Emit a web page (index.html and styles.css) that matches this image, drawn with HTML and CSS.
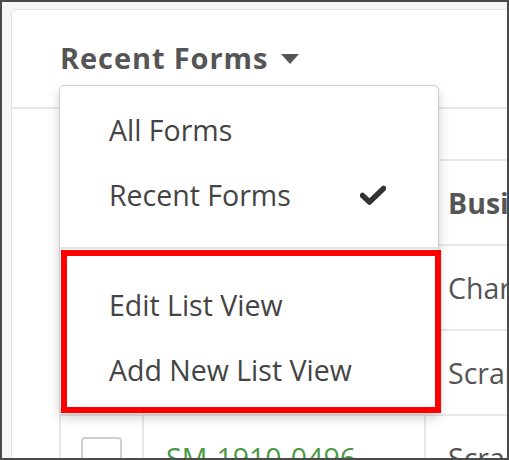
FILE: index.html
```html
<!DOCTYPE html>
<html lang="en">
<head>
<meta charset="utf-8">
<title>Recent Forms</title>
<link rel="stylesheet" href="styles.css">
</head>
<body>
<div class="frame">
  <div class="card">
    <div class="card-header">
      <span class="title">Recent Forms</span><span class="caret"></span>
    </div>
    <div class="card-body">
      <div class="gutter"></div>
      <div class="table">
        <div class="band"></div>
        <div class="row head">
          <div class="cell check"><span class="box"></span></div>
          <div class="cell"></div>
          <div class="cell strong">Business Name</div>
        </div>
        <div class="row">
          <div class="cell check"><span class="box"></span></div>
          <div class="cell id"></div>
          <div class="cell">Charlotte Metals</div>
        </div>
        <div class="row">
          <div class="cell check"><span class="box"></span></div>
          <div class="cell id"></div>
          <div class="cell">Scrap Metal Co</div>
        </div>
        <div class="row">
          <div class="cell check"><span class="box"></span></div>
          <div class="cell id">SM-1910-0496</div>
          <div class="cell">Scrap Metal Co</div>
        </div>
      </div>
    </div>
    <div class="dropdown">
      <div class="item">All Forms</div>
      <div class="item">Recent Forms
        <svg class="tick" width="26" height="20" viewBox="0 0 26 20"><path d="M2.5 10.5 L9.5 17 L23.5 3.5" fill="none" stroke="#333" stroke-width="5.5" stroke-linejoin="round" stroke-linecap="round"/></svg>
      </div>
      <div class="divider"></div>
      <div class="item">Edit List View</div>
      <div class="item">Add New List View</div>
    </div>
  </div>
  <div class="highlight"></div>
</div>
</body>
</html>
```

FILE: styles.css
```css
* { box-sizing: border-box; }
html, body { margin: 0; padding: 0; background: #fff; }
body { font-family: "Open Sans", "DejaVu Sans", sans-serif; }

.frame {
  position: relative;
  width: 509px;
  height: 460px;
  border: 2px solid #4a4a4a;
  background: #f5f5f5;
  overflow: hidden;
  padding: 7px 0 0 9px;
}

.card {
  position: relative;
  width: 620px;
  height: 620px;
  background: #fff;
  border: 1px solid #e4e4e4;
  border-radius: 5px;
}

.card-header {
  height: 99px;
  padding: 30px 0 0 48px;
  border-bottom: 2px solid #e8e8e8;
  line-height: 36px;
  white-space: nowrap;
}
.title {
  font-size: 29px;
  font-weight: 700;
  letter-spacing: 0.9px;
  color: #555;
}
.caret {
  display: inline-block;
  width: 0;
  height: 0;
  margin-left: 13px;
  vertical-align: 5px;
  border-left: 9.5px solid transparent;
  border-right: 9.5px solid transparent;
  border-top: 10px solid #555;
}

.card-body { display: flex; }
.gutter { width: 47px; flex: none; }
.table { flex: 1; }
.band { height: 52px; border-bottom: 2px solid #e8e8e8; }
.row {
  display: grid;
  grid-template-columns: 83px 282px 1fr;
  height: 85px;
  border-bottom: 2px solid #e8e8e8;
}
.cell {
  display: flex;
  align-items: center;
  padding-left: 22px;
  border-left: 2px solid #e8e8e8;
  font-size: 28.5px;
  color: #555;
  white-space: nowrap;
  overflow: hidden;
}
.cell.strong { font-weight: 700; }
.cell.id { color: #4b9a45; }
.cell.check { justify-content: center; padding-left: 0; }
.box {
  width: 41px;
  height: 41px;
  border: 2px solid #cfcfcf;
  border-radius: 4px;
  background: #fff;
}

.dropdown {
  position: absolute;
  left: 47px;
  top: 75px;
  width: 380px;
  background: #fff;
  border: 1px solid #cdcdcd;
  border-radius: 5px;
  box-shadow: 0 6px 12px rgba(0, 0, 0, 0.18);
  padding: 11px 0 9px;
}
.item {
  display: flex;
  align-items: center;
  justify-content: space-between;
  height: 65px;
  padding: 0 52px 0 49px;
  font-size: 28.5px;
  color: #444;
  white-space: nowrap;
}
.tick { flex: none; }
.divider {
  height: 2px;
  margin: 20px 0 23px;
  background: #e5e5e5;
}

.highlight {
  position: absolute;
  left: 59px;
  top: 248px;
  width: 380px;
  height: 163px;
  border: 6px solid #ff0000;
}
```
